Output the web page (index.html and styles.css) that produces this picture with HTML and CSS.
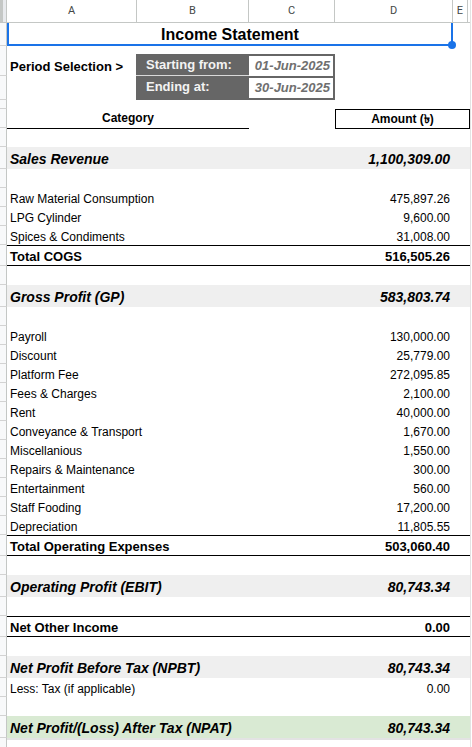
FILE: index.html
```html
<!DOCTYPE html>
<html lang="en">
<head>
    <meta charset="UTF-8" />
    <meta name="viewport" content="width=device-width, initial-scale=1.0">
    <title>Income Statement</title>
    <link rel="stylesheet" href="styles.css">
</head>
<body>
    <div class="sheet">
        <!-- column headers -->
        <div class="colhead">
            <div class="corner"></div>
            <div class="ch col-a">A</div>
            <div class="ch col-b">B</div>
            <div class="ch col-c">C</div>
            <div class="ch col-d">D</div>
            <div class="ch col-e">E</div>
        </div>

        <div class="row row-title">
            <div class="rh"></div>
            <div class="line">
                <div class="title">Income Statement<span class="handle"></span></div>
            </div>
        </div>

        <div class="row row-period">
            <div class="rh-stack">
                <div class="rh rh-30"></div>
                <div class="rh rh-24"></div>
            </div>
            <div class="line period">
                <div class="period-label">Period Selection &gt;</div>
                <div class="range-label from">Starting from:</div>
                <div class="range-label to">Ending at:</div>
                <div class="date from">01-Jun-2025</div>
                <div class="date to">30-Jun-2025</div>
            </div>
        </div>

        <div class="row row-gap"><div class="rh"></div><div class="line"></div></div>

        <div class="row">
            <div class="rh"></div>
            <div class="line">
                <div class="cat-head">Category</div>
                <div class="amt-head">Amount (৳)</div>
            </div>
        </div>

        <div class="row"><div class="rh"></div><div class="line"></div></div>

        <div class="row band">
            <div class="rh"></div>
            <div class="line"><div class="label">Sales Revenue</div><div class="amt">1,100,309.00</div></div>
        </div>

        <div class="row"><div class="rh"></div><div class="line"></div></div>

        <div class="row"><div class="rh"></div><div class="line"><div class="label">Raw Material Consumption</div><div class="amt">475,897.26</div></div></div>
        <div class="row"><div class="rh"></div><div class="line"><div class="label">LPG Cylinder</div><div class="amt">9,600.00</div></div></div>
        <div class="row"><div class="rh"></div><div class="line"><div class="label">Spices &amp; Condiments</div><div class="amt">31,008.00</div></div></div>

        <div class="row total">
            <div class="rh"></div>
            <div class="line"><div class="label">Total COGS</div><div class="amt">516,505.26</div></div>
        </div>

        <div class="row"><div class="rh"></div><div class="line"></div></div>

        <div class="row band">
            <div class="rh"></div>
            <div class="line"><div class="label">Gross Profit (GP)</div><div class="amt">583,803.74</div></div>
        </div>

        <div class="row"><div class="rh"></div><div class="line"></div></div>

        <div class="row"><div class="rh"></div><div class="line"><div class="label">Payroll</div><div class="amt">130,000.00</div></div></div>
        <div class="row"><div class="rh"></div><div class="line"><div class="label">Discount</div><div class="amt">25,779.00</div></div></div>
        <div class="row"><div class="rh"></div><div class="line"><div class="label">Platform Fee</div><div class="amt">272,095.85</div></div></div>
        <div class="row"><div class="rh"></div><div class="line"><div class="label">Fees &amp; Charges</div><div class="amt">2,100.00</div></div></div>
        <div class="row"><div class="rh"></div><div class="line"><div class="label">Rent</div><div class="amt">40,000.00</div></div></div>
        <div class="row"><div class="rh"></div><div class="line"><div class="label">Conveyance &amp; Transport</div><div class="amt">1,670.00</div></div></div>
        <div class="row"><div class="rh"></div><div class="line"><div class="label">Miscellanious</div><div class="amt">1,550.00</div></div></div>
        <div class="row"><div class="rh"></div><div class="line"><div class="label">Repairs &amp; Maintenance</div><div class="amt">300.00</div></div></div>
        <div class="row"><div class="rh"></div><div class="line"><div class="label">Entertainment</div><div class="amt">560.00</div></div></div>
        <div class="row"><div class="rh"></div><div class="line"><div class="label">Staff Fooding</div><div class="amt">17,200.00</div></div></div>
        <div class="row"><div class="rh"></div><div class="line"><div class="label">Depreciation</div><div class="amt">11,805.55</div></div></div>

        <div class="row total">
            <div class="rh"></div>
            <div class="line"><div class="label">Total Operating Expenses</div><div class="amt">503,060.40</div></div>
        </div>

        <div class="row"><div class="rh"></div><div class="line"></div></div>

        <div class="row band">
            <div class="rh"></div>
            <div class="line"><div class="label">Operating Profit (EBIT)</div><div class="amt">80,743.34</div></div>
        </div>

        <div class="row"><div class="rh"></div><div class="line"></div></div>

        <div class="row total">
            <div class="rh"></div>
            <div class="line"><div class="label">Net Other Income</div><div class="amt">0.00</div></div>
        </div>

        <div class="row"><div class="rh"></div><div class="line"></div></div>

        <div class="row band">
            <div class="rh"></div>
            <div class="line"><div class="label">Net Profit Before Tax (NPBT)</div><div class="amt">80,743.34</div></div>
        </div>

        <div class="row"><div class="rh"></div><div class="line"><div class="label">Less: Tax (if applicable)</div><div class="amt">0.00</div></div></div>

        <div class="row"><div class="rh"></div><div class="line"></div></div>

        <div class="row band green">
            <div class="rh"></div>
            <div class="line"><div class="label">Net Profit/(Loss) After Tax (NPAT)</div><div class="amt">80,743.34</div></div>
        </div>

        <div class="row row-last"><div class="rh"></div><div class="line"></div></div>
    </div>
</body>
</html>
```

FILE: styles.css
```css
body {
    margin: 0;
    background-color: #fff;
    font-family: "Liberation Sans", Arial, sans-serif;
    color: #000;
    overflow: hidden;
}

.sheet {
    width: 470px;
    height: 747px;
    border-right: 1px solid #e3e3e3;
}

/* column headers */
.colhead {
    display: flex;
    height: 23px;
    border-bottom: 1px solid #c4c7c5;
    box-sizing: border-box;
}

.corner {
    width: 7px;
    background-color: #e8eaed;
    border-left: 3px solid #c4c7c5;
    border-right: 1px solid #c4c7c5;
    box-sizing: border-box;
}

.ch {
    border-right: 1px solid #c4c7c5;
    box-sizing: border-box;
    text-align: center;
    line-height: 22px;
    font-family: Roboto, "Liberation Sans", sans-serif;
    font-size: 11px;
    color: #444746;
}

.col-a { width: 130px; }
.col-b { width: 112px; }
.col-c { width: 86px; }
.col-d { width: 118px; }
.col-e { width: 15px; }

/* rows */
.row {
    display: flex;
    height: 19px;
}

.rh {
    width: 7px;
    height: 100%;
    background-color: #f8f9fa;
    border-right: 1px solid #c4c7c5;
    border-bottom: 1px solid #d3d3d3;
    box-sizing: border-box;
    flex-shrink: 0;
}

.rh-stack {
    display: flex;
    flex-direction: column;
}

.rh-30 { height: 30px; }
.rh-24 { height: 24px; }

.line {
    width: 463px;
    display: grid;
    grid-template-columns: 130px 112px 86px 118px 17px;
    align-items: center;
    font-size: 12px;
    box-sizing: border-box;
}

.label {
    grid-column: 1 / 4;
    padding-left: 3px;
    padding-top: 2px;
    white-space: nowrap;
}

.amt {
    grid-column: 4;
    text-align: right;
    padding-right: 3px;
    padding-top: 2px;
    white-space: nowrap;
}

/* title */
.row-title {
    height: 23px;
}

.title {
    grid-column: 1 / 5;
    position: relative;
    height: 23px;
    padding-top: 1px;
    border: 2px solid #1a73e8;
    border-top: none;
    box-sizing: border-box;
    text-align: center;
    line-height: 22px;
    font-size: 16px;
    font-weight: bold;
}

.handle {
    position: absolute;
    right: -5px;
    bottom: -5px;
    width: 8px;
    height: 8px;
    border-radius: 50%;
    background-color: #1a73e8;
}

/* period selection */
.row-period {
    height: 54px;
}

.period {
    grid-template-rows: 30px 24px;
}

.period-label {
    grid-column: 1;
    grid-row: 1;
    align-self: end;
    padding-left: 3px;
    line-height: 19px;
    font-size: 13px;
    font-weight: bold;
    white-space: nowrap;
}

.range-label {
    grid-column: 2;
    margin-left: -1px;
    background-color: #666;
    color: #f3f3f3;
    font-size: 13px;
    font-weight: bold;
    padding-left: 10px;
    box-sizing: border-box;
}

.range-label.from {
    grid-row: 1;
    align-self: end;
    height: 22px;
    line-height: 21px;
    border-bottom: 1px solid #d9d9d9;
}

.range-label.to {
    grid-row: 2;
    align-self: stretch;
    line-height: 22px;
}

.date {
    grid-column: 3;
    background-color: #fff;
    border: 2px solid #666;
    border-left: none;
    box-sizing: border-box;
    text-align: right;
    padding-right: 3px;
    font-style: italic;
    font-weight: bold;
    font-size: 13px;
    color: #6f6f6f;
    white-space: nowrap;
}

.date.from {
    grid-row: 1;
    align-self: end;
    height: 22px;
    line-height: 19px;
    border-bottom: none;
}

.date.to {
    grid-row: 2;
    align-self: stretch;
    line-height: 20px;
}

.row-gap {
    height: 9px;
}

/* column captions */
.cat-head {
    grid-column: 1 / 3;
    align-self: stretch;
    text-align: center;
    line-height: 19px;
    font-weight: bold;
    border-bottom: 1px solid #000;
}

.amt-head {
    grid-column: 4 / 6;
    align-self: stretch;
    text-align: center;
    line-height: 18px;
    font-weight: bold;
    border: 1px solid #000;
}

/* section bands */
.band {
    height: 22px;
}

.band .line {
    background-color: #efefef;
    font-size: 14px;
    font-weight: bold;
    font-style: italic;
}

.band.green .line {
    background-color: #d9ead3;
}

.total {
    height: 21px;
}

.total .line {
    border-top: 1px solid #000;
    border-bottom: 1px solid #000;
    font-size: 13px;
    font-weight: bold;
}

.row-last .line {
    border-top: 2px solid #e3e3e3;
}
```
